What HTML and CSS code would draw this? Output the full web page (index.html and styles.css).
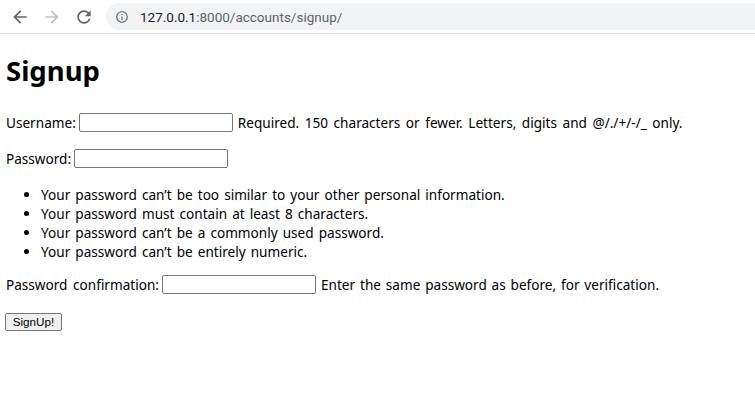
FILE: index.html
```html
<!DOCTYPE html>
<html lang="en">
<head>
<meta charset="utf-8">
<title>Signup</title>
<link rel="stylesheet" href="styles.css">
</head>
<body>
<header class="toolbar">
  <div class="nav">
    <svg class="nav-icon back" viewBox="0 0 24 24"><path d="M20 11H7.83l5.59-5.59L12 4l-8 8 8 8 1.41-1.41L7.83 13H20v-2z"/></svg>
    <svg class="nav-icon fwd" viewBox="0 0 24 24"><path d="M4 11h12.17l-5.59-5.59L12 4l8 8-8 8-1.41-1.41L16.17 13H4v-2z"/></svg>
    <svg class="nav-icon reload" viewBox="0 0 24 24"><path d="M17.65 6.35C16.2 4.9 14.21 4 12 4c-4.42 0-7.990 3.58-7.99 8s3.57 8 7.99 8c3.73 0 6.84-2.55 7.73-6h-2.08c-.82 2.33-3.04 4-5.65 4-3.31 0-6-2.690-6-6s2.69-6 6-6c1.66 0 3.14.69 4.22 1.78L13 11h7V4l-2.35 2.35z"/></svg>
  </div>
  <div class="omnibox">
    <svg class="info" viewBox="0 0 24 24"><path d="M11 7h2v2h-2zm0 4h2v6h-2zm1-9C6.48 2 2 6.48 2 12s4.48 10 10 10 10-4.48 10-10S17.52 2 12 2zm0 18c-4.41 0-8-3.59-8-8s3.59-8 8-8 8 3.59 8 8-3.59 8-8 8z"/></svg>
    <span class="url"><span class="host">127.0.0.1</span>:8000/accounts/signup/</span>
  </div>
</header>
<main class="page">
  <h1 class="title">Signup</h1>
  <form class="form">
    <p class="row row-user"><label for="u">Username:</label><input id="u" type="text" class="field"><span class="help">Required. 150 characters or fewer. Letters, digits and @/./+/-/_ only.</span></p>
    <p class="row row-pass"><label for="p1">Password:</label><input id="p1" type="password" class="field"></p>
    <ul class="rules">
      <li>Your password can’t be too similar to your other personal information.</li>
      <li>Your password must contain at least 8 characters.</li>
      <li>Your password can’t be a commonly used password.</li>
      <li>Your password can’t be entirely numeric.</li>
    </ul>
    <p class="row row-confirm"><label for="p2">Password confirmation:</label><input id="p2" type="password" class="field"><span class="help help-confirm">Enter the same password as before, for verification.</span></p>
    <div class="actions"><button type="button" class="btn">SignUp!</button></div>
  </form>
</main>
</body>
</html>
```
FILE: styles.css
```css
html, body {
  margin: 0;
  padding: 0;
  background: #ffffff;
}
body {
  font-family: "Noto Sans", "Open Sans", sans-serif;
  color: #000;
}
.toolbar {
  height: 33px;
  border-bottom: 1px solid #dadce0;
  display: flex;
  align-items: center;
  background: #fff;
}
.nav {
  display: flex;
  align-items: center;
  padding-left: 10px;
  gap: 12px;
  width: 96px;
}
.nav-icon {
  width: 20px;
  height: 20px;
  fill: #5f6368;
}
.nav-icon.fwd {
  fill: #bdc1c6;
}
.omnibox {
  flex: 1;
  height: 27px;
  background: #f1f3f4;
  border-radius: 14px 0 0 14px;
  display: flex;
  align-items: center;
  padding-left: 9px;
  gap: 11px;
}
.info {
  width: 14px;
  height: 14px;
  fill: #5f6368;
}
.url {
  font-family: Roboto, "Noto Sans", sans-serif;
  font-size: 13.5px;
  color: #5f6368;
}
.host {
  color: #202124;
}
.page {
  padding: 0 5px;
}
.title {
  font-size: 27.5px;
  line-height: 36px;
  font-weight: 700;
  margin: 19px 0 0 1px;
}
.form {
  display: flex;
  flex-direction: column;
  font-size: 13.6px;
  line-height: 19px;
  word-spacing: 2px;
}
.row {
  margin: 0;
  display: flex;
  align-items: center;
  gap: 3px;
  height: 19px;
  white-space: nowrap;
  padding-left: 1px;
}
.row .help {
  margin-left: 2px;
}
.help-confirm {
  word-spacing: 1.3px;
}
.row-user { margin-top: 24px; }
.row-pass { margin-top: 17px; }
.row-confirm { margin-top: 14px; }
.field {
  box-sizing: border-box;
  width: 154px;
  height: 19px;
  margin: 0;
  padding: 1px 2px;
  border: 1px solid #767676;
  border-radius: 2px;
  background: #fff;
}
.rules {
  margin: 16.5px 0 0 0;
  padding-left: 36px;
  word-spacing: 1.5px;
}
.rules li {
  line-height: 19px;
}
.actions {
  margin-top: 17.5px;
}
.btn {
  box-sizing: border-box;
  height: 18px;
  width: 57px;
  padding: 0;
  font-family: "Liberation Sans", Arial, sans-serif;
  font-size: 11.7px;
  word-spacing: 0;
  color: #000;
  background: #efefef;
  border: 1px solid #767676;
  border-radius: 2px;
}
```
